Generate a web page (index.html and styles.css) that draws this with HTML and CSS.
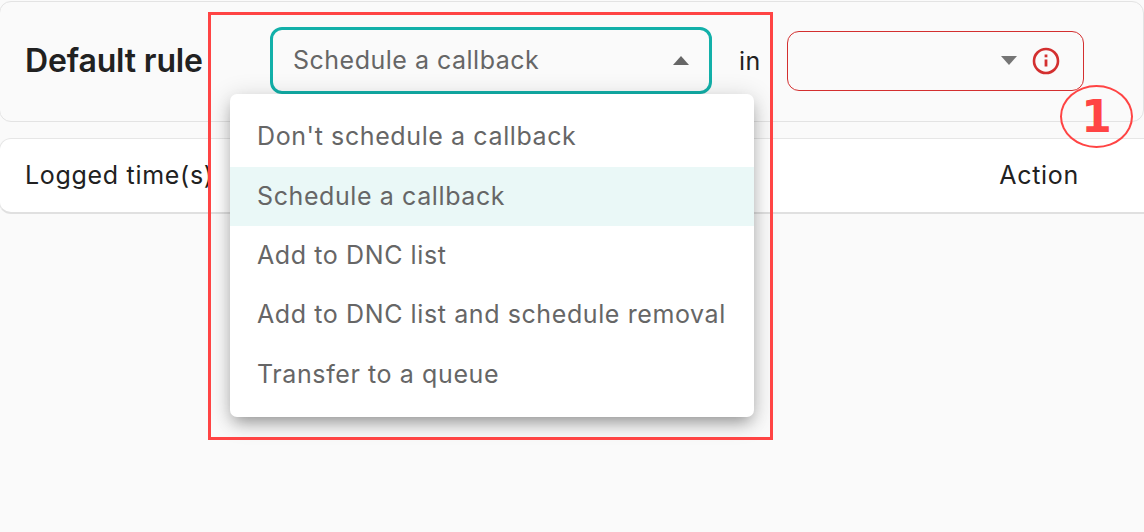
FILE: index.html
```html
<!DOCTYPE html>
<html lang="en">
<head>
  <meta charset="UTF-8" />
  <title>Default rule</title>
  <link rel="stylesheet" href="styles.css">
</head>
<body>

  <div class="rule-panel">
    <h2 class="rule-title">Default rule</h2>
    <div class="select select-open">
      <span class="select-text">Schedule a callback</span>
      <span class="arrow arrow-up"></span>
    </div>
    <span class="in-label">in</span>
    <div class="select select-error">
      <span class="arrow arrow-down"></span>
      <svg class="info-icon" width="28" height="28" viewBox="0 0 28 28" fill="none" stroke="#d32f2f">
        <circle cx="14" cy="14" r="12" stroke-width="2.6"/>
        <path d="M14 12.5v7" stroke-width="2.8"/>
        <path d="M14 7.5v2.8" stroke-width="2.8"/>
      </svg>
    </div>
  </div>

  <div class="table-head">
    <span>Logged time(s)</span>
    <span>Action</span>
  </div>

  <ul class="menu">
    <li>Don't schedule a callback</li>
    <li class="selected">Schedule a callback</li>
    <li>Add to DNC list</li>
    <li>Add to DNC list and schedule removal</li>
    <li>Transfer to a queue</li>
  </ul>

  <div class="mark-box"></div>
  <div class="mark-number">1</div>

</body>
</html>
```

FILE: styles.css
```css
* {
  box-sizing: border-box;
}

html, body {
  height: 100%;
}

body {
  margin: 0;
  overflow: hidden;
  position: relative;
  background: #fafafa;
  font-family: "Inter", "Noto Sans", sans-serif;
  color: #212121;
}

.rule-panel {
  display: flex;
  align-items: center;
  height: 121px;
  margin: 1px 0 16px -1px;
  padding: 0 40px 2px 25px;
  border: 1px solid #e3e3e3;
  border-radius: 12px;
}

.rule-title {
  width: 245px;
  margin: 0;
  font-size: 32px;
  font-weight: 600;
  letter-spacing: -0.15px;
  white-space: nowrap;
}

.select {
  display: flex;
  align-items: center;
  justify-content: space-between;
  color: #666;
  font-size: 25px;
}

.select-text {
  padding-bottom: 2px;
}

.select-open {
  width: 442px;
  height: 67px;
  padding: 0 20px;
  border: 3px solid #12b0a9;
  border-radius: 12px;
  letter-spacing: 0.5px;
}

.select-error {
  justify-content: flex-end;
  width: 297px;
  height: 60px;
  padding-right: 23px;
  border: 1px solid #d32f2f;
  border-radius: 12px;
}

.arrow {
  width: 0;
  height: 0;
  border-left: 8.5px solid transparent;
  border-right: 8.5px solid transparent;
}

.arrow-up {
  border-bottom: 9px solid #666;
}

.arrow-down {
  margin-right: 15px;
  border-top: 9px solid #757575;
}

.in-label {
  width: 75px;
  padding-left: 27px;
  font-size: 25px;
  letter-spacing: 0.5px;
}

.table-head {
  display: flex;
  justify-content: space-between;
  align-items: center;
  height: 76px;
  margin: 0 -20px 0 -1px;
  padding: 0 84px 2px 25px;
  background: #fff;
  border: 1px solid #e6e6e6;
  border-bottom: 2px solid #e0e0e0;
  border-radius: 12px;
  font-size: 25px;
  letter-spacing: 0.7px;
}

.menu {
  position: absolute;
  left: 230px;
  top: 94px;
  width: 524px;
  height: 323px;
  margin: 0;
  padding: 13.6px 0;
  list-style: none;
  background: #fff;
  border-radius: 7px;
  box-shadow: 0 8px 16px -4px rgba(0,0,0,0.35), 0 4px 24px 2px rgba(0,0,0,0.14);
  color: #666;
  font-size: 25px;
  letter-spacing: 0.6px;
}

.menu li {
  display: flex;
  align-items: center;
  height: 59.4px;
  padding: 0 27px 2px;
  white-space: nowrap;
}

.menu .selected {
  background: #eaf8f7;
}

.mark-box {
  position: absolute;
  left: 208px;
  top: 12px;
  width: 565px;
  height: 428px;
  border: 3px solid #ff4444;
}

.mark-number {
  position: absolute;
  left: 1060px;
  top: 85px;
  width: 73px;
  height: 63px;
  display: flex;
  align-items: center;
  justify-content: center;
  border: 2.5px solid #ff4444;
  border-radius: 50%;
  color: #ff4444;
  font-family: "DejaVu Sans", sans-serif;
  font-size: 44px;
  font-weight: 700;
}
```
